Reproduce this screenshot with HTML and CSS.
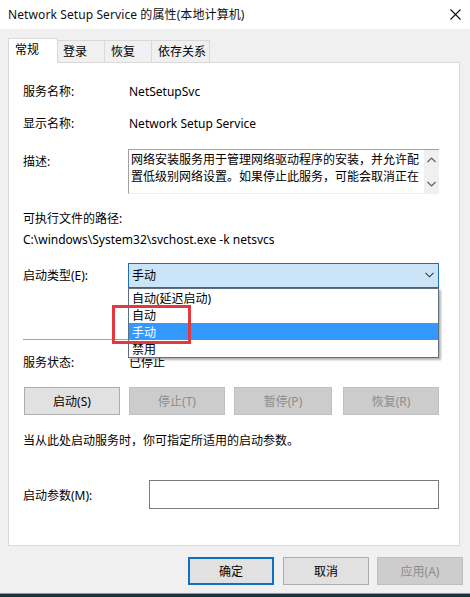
FILE: index.html
```html
<!DOCTYPE html>
<html lang="zh-CN">
<head>
<meta charset="utf-8">
<title>Network Setup Service 的属性(本地计算机)</title>
<link rel="stylesheet" href="styles.css">
</head>
<body>
<div class="window">
  <div class="titlebar">
    <span class="title">Network Setup Service 的属性(本地计算机)</span>
    <svg class="close" width="11" height="11" viewBox="0 0 11 11"><path d="M0.5 0.5 L10.5 10.5 M10.5 0.5 L0.5 10.5" stroke="#111" stroke-width="1.1" fill="none"/></svg>
  </div>
  <div class="tabs">
    <div class="tab active">常规</div>
    <div class="tab t2">登录</div>
    <div class="tab t3">恢复</div>
    <div class="tab t4">依存关系</div>
  </div>
  <div class="panel">
    <div class="row r1"><span class="label">服务名称:</span><span class="value">NetSetupSvc</span></div>
    <div class="row r2"><span class="label">显示名称:</span><span class="value">Network Setup Service</span></div>
    <div class="row desc-row">
      <span class="label desc-label">描述:</span>
      <div class="desc-box">
        <div class="desc-text">网络安装服务用于管理网络驱动程序的安装，并允许配置低级别网络设置。如果停止此服务，可能会取消正在进行的所有驱动程序安装。</div>
        <div class="scrollbar">
          <svg width="9" height="6" viewBox="0 0 9 6"><path d="M0.5 5 L4.5 1 L8.5 5" stroke="#606060" stroke-width="1.2" fill="none"/></svg>
          <svg width="9" height="6" viewBox="0 0 9 6"><path d="M0.5 1 L4.5 5 L8.5 1" stroke="#606060" stroke-width="1.2" fill="none"/></svg>
        </div>
      </div>
    </div>
    <div class="path-label">可执行文件的路径:</div>
    <div class="path">C:\windows\System32\svchost.exe -k netsvcs</div>
    <div class="row type-row">
      <span class="label">启动类型(E):</span>
      <div class="combo">
        <span class="combo-text">手动</span>
        <svg class="combo-arrow" width="9" height="6" viewBox="0 0 9 6"><path d="M0.5 0.8 L4.5 4.8 L8.5 0.8" stroke="#3a3a3a" stroke-width="1.1" fill="none"/></svg>
        <ul class="list">
          <li>自动(延迟启动)</li>
          <li>自动</li>
          <li class="selected">手动</li>
          <li>禁用</li>
        </ul>
      </div>
    </div>
    <div class="separator"></div>
    <div class="row status-row"><span class="label">服务状态:</span><span class="value">已停止</span></div>
    <div class="svc-buttons">
      <button class="btn">启动(S)</button>
      <button class="btn disabled">停止(T)</button>
      <button class="btn disabled wide">暂停(P)</button>
      <button class="btn disabled">恢复(R)</button>
    </div>
    <div class="hint">当从此处启动服务时，你可指定所适用的启动参数。</div>
    <div class="row param-row">
      <span class="label param-label">启动参数(M):</span>
      <div class="param-input"></div>
    </div>
    <div class="highlight-box"></div>
  </div>
  <div class="footer">
    <button class="btn fbtn default">确定</button>
    <button class="btn fbtn">取消</button>
    <button class="btn fbtn disabled">应用(A)</button>
  </div>
  <div class="taskbar"></div>
</div>
</body>
</html>
```
FILE: styles.css
```css
* { box-sizing: border-box; }
html, body { margin: 0; padding: 0; }
body {
  width: 470px;
  height: 597px;
  overflow: hidden;
  background: #f0f0f0;
  font-family: "Noto Sans", "Noto Sans CJK SC", sans-serif;
  font-size: 12px;
  line-height: 17px;
  color: #000;
}
.window {
  width: 470px;
  height: 597px;
  display: flex;
  flex-direction: column;
}
.titlebar {
  height: 29px;
  background: #fff;
  display: flex;
  align-items: center;
  padding-left: 8px;
  padding-right: 9px;
  justify-content: space-between;
}
.title { color: #111; padding-bottom: 1px; letter-spacing: 0.1px; }
.close { margin-bottom: 1px; }

.tabs {
  display: flex;
  align-items: flex-end;
  height: 24px;
  margin-top: 9px;
  margin-left: 8px;
  position: relative;
  z-index: 2;
}
.tab {
  height: 22px;
  padding: 2px 0 0 6px;
  border: 1px solid #d9d9d9;
  border-bottom: none;
  background: #f0f0f0;
  line-height: 17px;
}
.tab.active {
  width: 50px;
  height: 25px;
  margin-bottom: -1px;
  background: #fff;
  padding-left: 6px;
}
.t2 { width: 47px; border-left: none; padding-left: 5px; }
.t3 { width: 47px; border-left: none; }
.t4 { width: 58px; border-left: none; }

.panel {
  position: relative;
  margin-left: 8px;
  width: 452px;
  height: 484px;
  background: #fff;
  border: 1px solid #d9d9d9;
  padding: 0 20px 0 14px;
}
.row { display: flex; }
.label { width: 105px; flex: none; }
.value { padding-left: 1px; }
.r1 { margin-top: 20px; }
.r2 { margin-top: 15px; }

.desc-row { margin-top: 17px; align-items: flex-start; }
.desc-label { padding-top: 4px; }
.desc-box {
  width: 311px;
  height: 45px;
  border-top: 1px solid #a0a0a0;
  border-left: 1px solid #a0a0a0;
  border-bottom: 1px solid #f0f0f0;
  display: flex;
}
.desc-text {
  flex: 1;
  height: 35px;
  overflow: hidden;
  padding: 1px 2px 0 2px;
}
.scrollbar {
  width: 15px;
  background: #f0f0f0;
  display: flex;
  flex-direction: column;
  justify-content: space-between;
  align-items: center;
  padding: 7px 0 6px 0;
}

.path-label { margin-top: 16px; }
.path { margin-top: 4px; }

.type-row { margin-top: 15px; align-items: center; }
.combo {
  position: relative;
  width: 311px;
  height: 25px;
  border: 1px solid #1f6cbf;
  background: #cce4f7;
  display: flex;
  align-items: center;
  justify-content: space-between;
  padding: 0 4px 0 3px;
}
.combo-text { padding-bottom: 1px; }
.combo-arrow { margin-bottom: 1px; }
.list {
  position: absolute;
  left: -1px;
  top: 24px;
  width: 311px;
  margin: 0;
  padding: 0;
  list-style: none;
  background: #fff;
  border: 1px solid #5d6f82;
  box-shadow: 2px 2px 2px rgba(0, 0, 0, 0.3);
  z-index: 5;
}
.list li {
  height: 17px;
  line-height: 17px;
  padding-left: 3px;
  padding-top: 1px;
}
.list li.selected { background: #3399ff; color: #fff; }

.separator {
  margin-top: 51px;
  height: 1px;
  background: #a0a0a0;
  width: 416px;
}
.status-row { margin-top: 14px; }

.svc-buttons {
  margin-top: 16px;
  margin-left: 1px;
  display: flex;
  gap: 9px;
}
.btn {
  font: inherit;
  color: #000;
  height: 28px;
  width: 96px;
  background: #e1e1e1;
  border: 1px solid #adadad;
  padding: 0;
  line-height: 17px;
}
.btn.wide { width: 98px; margin-right: 2px; }
.btn.disabled {
  background: #cccccc;
  border-color: #bfbfbf;
  color: #8c8c8c;
}
.hint { margin-top: 17px; }

.param-row { margin-top: 31px; align-items: center; }
.param-label { width: 126px; padding-top: 1px; }
.param-input {
  width: 291px;
  height: 29px;
  border: 1px solid #7a7a7a;
  background: #fff;
}

.highlight-box {
  position: absolute;
  left: 103px;
  top: 242px;
  width: 79px;
  height: 39px;
  border: 3px solid #e3393c;
  z-index: 6;
}

.footer {
  margin-top: 11px;
  display: flex;
  justify-content: flex-end;
  padding-right: 7px;
  gap: 9px;
}
.fbtn { width: 86px; height: 28px; }
.fbtn.default { border: 2px solid #0f6fc6; }
.fbtn.disabled { margin-left: -1px; }

.taskbar {
  margin-top: auto;
  height: 4px;
  border-top: 1px solid #45b8c2;
  background: #17333f;
}
```
